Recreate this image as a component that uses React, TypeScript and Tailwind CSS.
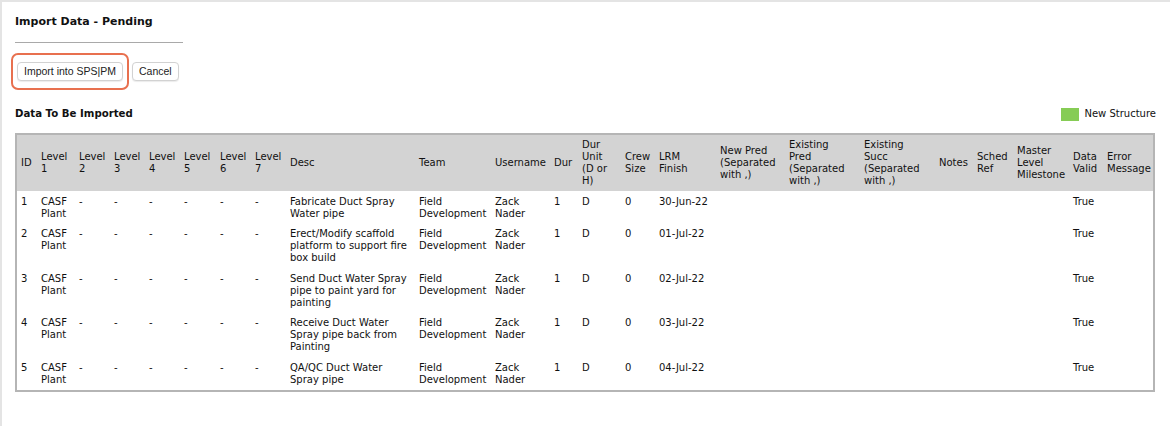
import React from "react";

type Row = {
  id: string;
  desc: string;
  finish: string;
};

const rows: Row[] = [
  { id: "1", desc: "Fabricate Duct Spray Water pipe", finish: "30-Jun-22" },
  { id: "2", desc: "Erect/Modify scaffold platform to support fire box build", finish: "01-Jul-22" },
  { id: "3", desc: "Send Duct Water Spray pipe to paint yard for painting", finish: "02-Jul-22" },
  { id: "4", desc: "Receive Duct Water Spray pipe back from Painting", finish: "03-Jul-22" },
  { id: "5", desc: "QA/QC Duct Water Spray pipe", finish: "04-Jul-22" },
];

// Header labels, one entry per visual line of the heading cell
const columns: { lines: string[]; w: string }[] = [
  { lines: ["ID"], w: "w-[20px]" },
  { lines: ["Level", "1"], w: "w-[38px]" },
  { lines: ["Level", "2"], w: "w-[35px]" },
  { lines: ["Level", "3"], w: "w-[35px]" },
  { lines: ["Level", "4"], w: "w-[35px]" },
  { lines: ["Level", "5"], w: "w-[36px]" },
  { lines: ["Level", "6"], w: "w-[35px]" },
  { lines: ["Level", "7"], w: "w-[35px]" },
  { lines: ["Desc"], w: "w-[129px]" },
  { lines: ["Team"], w: "w-[76px]" },
  { lines: ["Username"], w: "w-[59px]" },
  { lines: ["Dur"], w: "w-[28px]" },
  { lines: ["Dur", "Unit", "(D or", "H)"], w: "w-[43px]" },
  { lines: ["Crew", "Size"], w: "w-[34px]" },
  { lines: ["LRM", "Finish"], w: "w-[61px]" },
  { lines: ["New Pred", "(Separated", "with ,)"], w: "w-[69px]" },
  { lines: ["Existing", "Pred", "(Separated", "with ,)"], w: "w-[75px]" },
  { lines: ["Existing", "Succ", "(Separated", "with ,)"], w: "w-[75px]" },
  { lines: ["Notes"], w: "w-[38px]" },
  { lines: ["Sched", "Ref"], w: "w-[40px]" },
  { lines: ["Master", "Level", "Milestone"], w: "w-[56px]" },
  { lines: ["Data", "Valid"], w: "w-[34px]" },
  { lines: ["Error", "Message"], w: "w-[50px]" },
];

const cell = "px-[4px] pt-[4.5px] pb-[4px] align-top text-left font-normal";

export default function App() {
  return (
    <div className="min-h-[426px] w-[1170px] border-t-2 border-l-2 border-[#e4e4e4] bg-white font-['DejaVu_Sans',Verdana,sans-serif] text-[10px] leading-[12px] text-[#111]">
      <div className="px-[13px] pt-[13px]">
        <h1 className="text-[11px] font-bold leading-[14px]">Import Data - Pending</h1>
        <div className="mt-[13px] h-px w-[168px] bg-[#a9a9a9]" />

        <div className="mt-[10px] flex items-center gap-[3px] font-['Liberation_Sans',Arial,sans-serif] text-[10.5px]">
          <div className="-ml-[4px] rounded-[7px] border-2 border-[#e8704f] px-[4px] py-[7px]">
            <button className="h-[19px] rounded-[4px] border border-[#d2d2d2] bg-white px-[6px] leading-[17px] text-[#222] shadow-[0_1px_1px_rgba(0,0,0,0.08)]">
              Import into SPS|PM
            </button>
          </div>
          <button className="h-[19px] rounded-[4px] border border-[#d2d2d2] bg-white px-[6px] leading-[17px] text-[#222] shadow-[0_1px_1px_rgba(0,0,0,0.08)]">
            Cancel
          </button>
        </div>

        <div className="mt-[17px] flex items-center justify-between pr-[1px]">
          <h2 className="text-[10.2px] font-bold leading-[14px]">Data To Be Imported</h2>
          <div className="flex items-center gap-[5px] text-[10px]">
            <span className="h-[13px] w-[18px] bg-[#86cc55]" />
            <span>New Structure</span>
          </div>
        </div>

        <div className="mt-[12px] w-[1140px] border-2 border-[#b5b5b5]">
          <table className="w-full table-fixed border-collapse">
            <colgroup>
              {columns.map((c) => (
                <col key={c.lines.join(" ")} className={c.w} />
              ))}
            </colgroup>
            <thead>
              <tr className="h-[56px] bg-[#d3d3d3]">
                {columns.map((c) => (
                  <th
                    key={c.lines.join(" ")}
                    className="whitespace-nowrap px-[4px] py-[4px] text-left align-middle font-normal"
                  >
                    {c.lines.map((l, i) => (
                      <span key={i} className="block">
                        {l}
                      </span>
                    ))}
                  </th>
                ))}
              </tr>
            </thead>
            <tbody>
              {rows.map((r) => (
                <tr key={r.id}>
                  <td className={cell}>{r.id}</td>
                  <td className={cell}>CASF Plant</td>
                  <td className={cell}>-</td>
                  <td className={cell}>-</td>
                  <td className={cell}>-</td>
                  <td className={cell}>-</td>
                  <td className={cell}>-</td>
                  <td className={cell}>-</td>
                  <td className={cell}>{r.desc}</td>
                  <td className={cell}>Field Development</td>
                  <td className={cell}>Zack Nader</td>
                  <td className={cell}>1</td>
                  <td className={cell}>D</td>
                  <td className={cell}>0</td>
                  <td className={cell}>{r.finish}</td>
                  <td className={cell}></td>
                  <td className={cell}></td>
                  <td className={cell}></td>
                  <td className={cell}></td>
                  <td className={cell}></td>
                  <td className={cell}></td>
                  <td className={cell}>True</td>
                  <td className={cell}></td>
                </tr>
              ))}
            </tbody>
          </table>
        </div>
      </div>
    </div>
  );
}
